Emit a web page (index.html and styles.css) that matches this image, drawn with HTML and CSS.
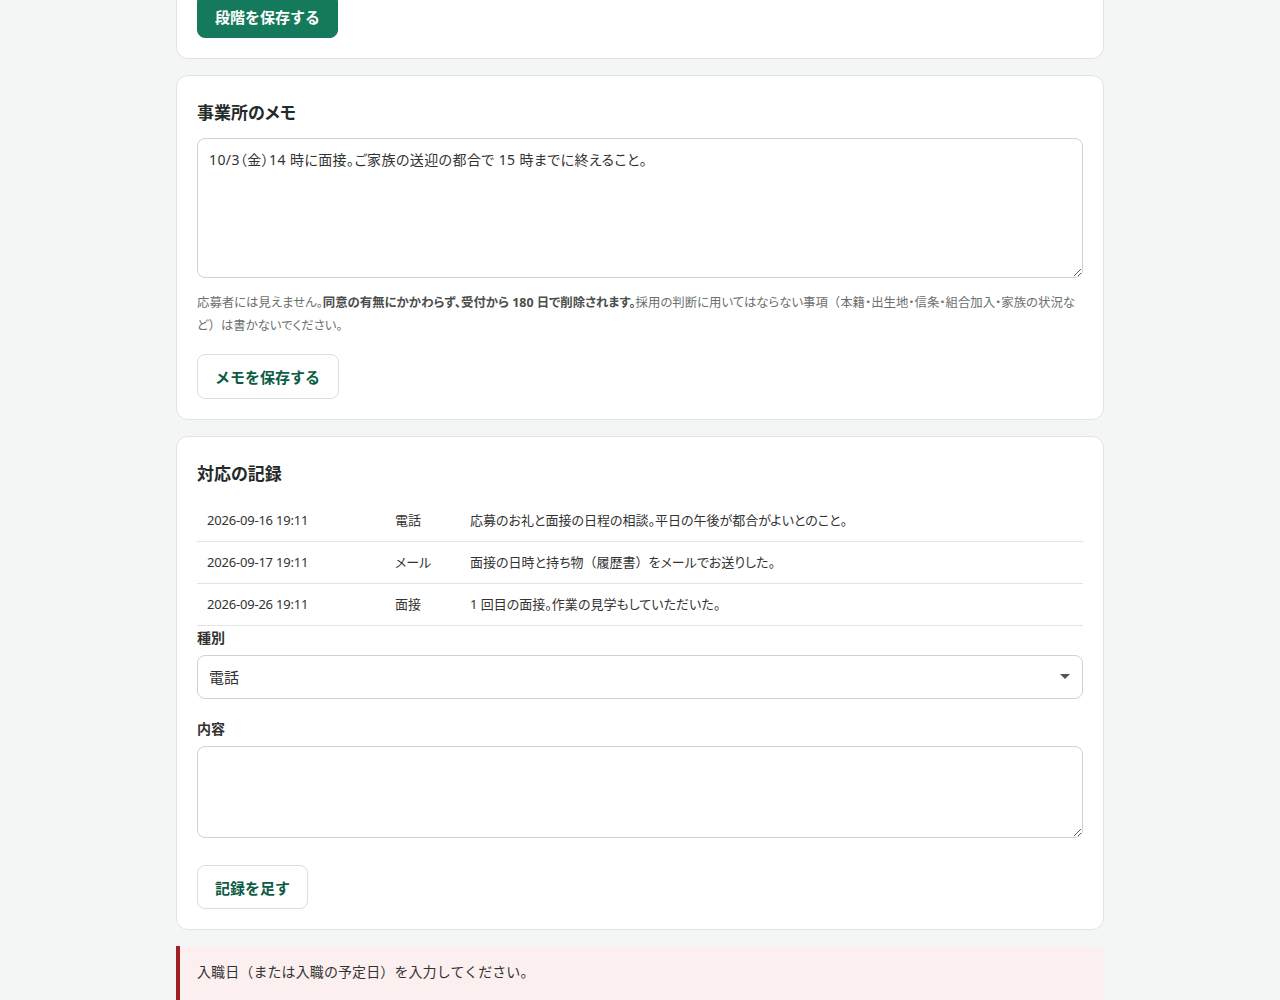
FILE: index.html
```html
<!DOCTYPE html>
<html lang="ja">
<head>
<meta charset="utf-8">
<title>応募者の詳細</title>
<link rel="stylesheet" href="styles.css">
</head>
<body>
<main class="wrap">
  <section class="card card-first">
    <button class="btn btn-primary" type="button">段階を保存する</button>
  </section>

  <section class="card">
    <h2 class="card-title">事業所のメモ</h2>
    <textarea class="textarea textarea-memo">10/3（金）14 時に面接。ご家族の送迎の都合で 15 時までに終えること。</textarea>
    <p class="help">応募者には見えません。<strong>同意の有無にかかわらず、受付から 180 日で削除されます。</strong>採用の判断に用いてはならない事項<span class="fw">（</span>本籍・出生地・信条・組合加入・家族の状況など<span class="fw">）</span>は書かないでください。</p>
    <button class="btn btn-outline btn-gap" type="button">メモを保存する</button>
  </section>

  <section class="card">
    <h2 class="card-title card-title-table">対応の記録</h2>
    <table class="log">
      <colgroup><col class="col-date"><col class="col-type"><col></colgroup>
      <tbody>
        <tr><td class="date">2026-09-16 19:11</td><td>電話</td><td>応募のお礼と面接の日程の相談。平日の午後が都合がよいとのこと。</td></tr>
        <tr><td class="date">2026-09-17 19:11</td><td>メール</td><td>面接の日時と持ち物<span class="fw">（</span>履歴書<span class="fw">）</span>をメールでお送りした。</td></tr>
        <tr><td class="date">2026-09-26 19:11</td><td>面接</td><td>1 回目の面接。作業の見学もしていただいた。</td></tr>
      </tbody>
    </table>
    <div class="field">
      <label class="label" for="kind">種別</label>
      <div class="select-wrap">
        <select id="kind" class="select">
          <option>電話</option>
          <option>メール</option>
          <option>面接</option>
        </select>
      </div>
    </div>
    <div class="field field-next">
      <label class="label" for="body">内容</label>
      <textarea id="body" class="textarea textarea-body"></textarea>
    </div>
    <button class="btn btn-outline btn-add" type="button">記録を足す</button>
  </section>

  <div class="alert">入職日（または入職の予定日）を入力してください。</div>
</main>
</body>
</html>
```

FILE: styles.css
```css
* { box-sizing: border-box; }

html, body {
  margin: 0;
  background: #f4f6f5;
}

body {
  font-family: "Noto Sans", "Noto Sans CJK JP", sans-serif;
  color: #333;
  font-size: 14px;
  font-feature-settings: "palt";
}

.fw {
  font-feature-settings: normal;
}

.wrap {
  width: 928px;
  margin: -27px auto 0;
  display: flex;
  flex-direction: column;
  gap: 16px;
}

.card {
  background: #fff;
  border: 1px solid #e2e4e3;
  border-radius: 12px;
  padding: 20px;
}

.card-title {
  margin: 4px 0 12px;
  font-size: 17px;
  line-height: 26px;
  font-weight: 700;
  color: #242a28;
}

.card-title-table { margin-bottom: 13px; }

.btn {
  font-family: inherit;
  font-feature-settings: normal;
  font-size: 15px;
  font-weight: 700;
  height: 44px;
  padding: 0 17px;
  border-radius: 8px;
  cursor: pointer;
  display: block;
}

.btn-primary {
  background: #147a5b;
  color: #fff;
  border: 1px solid #147a5b;
}

.btn-outline {
  background: #fff;
  color: #0e5c45;
  border: 1px solid #dcdfdd;
}

.btn-gap { margin-top: 17px; height: 45px; padding: 0 18px 0 17px; }
.btn-add { margin-top: 27px; }

.textarea {
  display: block;
  width: 100%;
  font-family: inherit;
  font-feature-settings: "palt";
  font-size: 14px;
  line-height: 22px;
  color: #333;
  border: 1px solid #cfd2d0;
  border-radius: 8px;
  padding: 10px 11px;
  background: #fff;
  resize: vertical;
}

.textarea-memo { height: 140px; letter-spacing: 0.4px; }
.textarea-body { height: 92px; }

.help {
  margin: 13px 0 0;
  font-size: 12.4px;
  line-height: 23px;
  color: #6b6f6d;
}

.help strong {
  font-weight: 700;
  color: #4a4e4c;
}

.log {
  width: 100%;
  border-collapse: collapse;
  table-layout: fixed;
  font-size: 13px;
  color: #333;
}

.col-date { width: 188px; }
.col-type { width: 75px; }

.log td {
  padding: 10px;
  line-height: 21px;
  border-bottom: 1px solid #e3e5e4;
  vertical-align: top;
}

.log .date { letter-spacing: -0.2px; }

.label {
  display: block;
  font-size: 14px;
  font-weight: 700;
  line-height: 24px;
  margin-bottom: 5px;
  color: #333;
}

.field-next { margin-top: 18px; }

.select-wrap {
  position: relative;
}

.select-wrap::after {
  content: "";
  position: absolute;
  right: 13px;
  top: 19px;
  border-left: 5px solid transparent;
  border-right: 5px solid transparent;
  border-top: 5px solid #555;
  pointer-events: none;
}

.select {
  display: block;
  width: 100%;
  height: 44px;
  appearance: none;
  -webkit-appearance: none;
  font-family: inherit;
  font-size: 15px;
  color: #333;
  border: 1px solid #cfd2d0;
  border-radius: 8px;
  background: #fff;
  padding: 0 11px;
}

.alert {
  background: #fcefef;
  border-left: 4px solid #9e1f24;
  border-radius: 0 8px 8px 0;
  padding: 15px 20px 23px 17px;
  font-size: 14px;
  line-height: 22px;
  color: #333;
  font-feature-settings: normal;
  letter-spacing: 0.1px;
}
```
